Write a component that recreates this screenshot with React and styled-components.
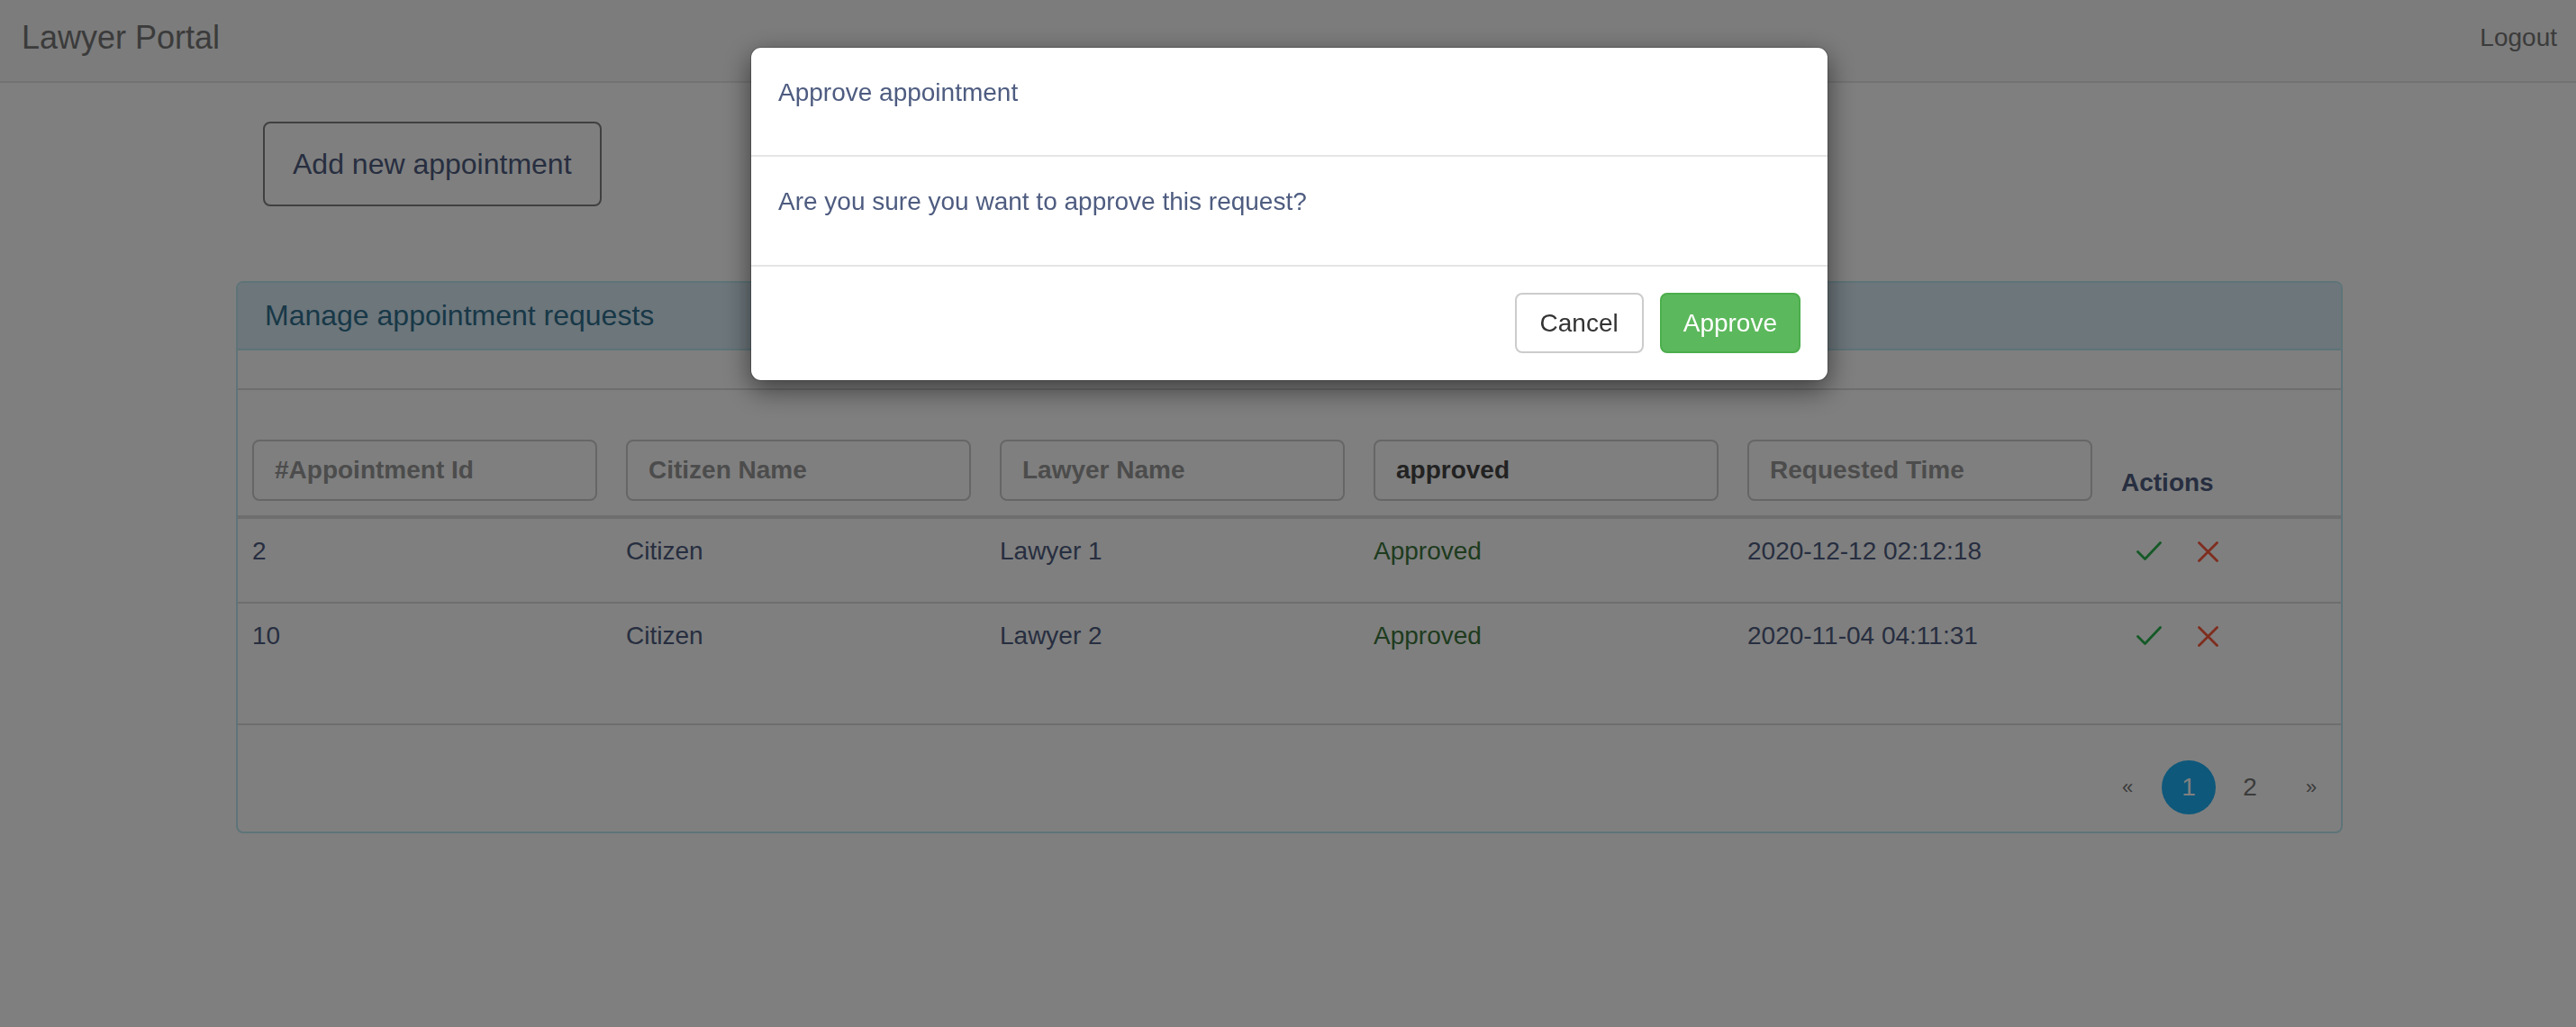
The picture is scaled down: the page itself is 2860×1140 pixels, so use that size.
import React from "react"
import styled, { createGlobalStyle } from "styled-components"

const TEXT = "#4e5c80"

const GlobalStyle = createGlobalStyle`
  html, body {
    margin: 0;
    padding: 0;
    background: #fff;
  }
  body {
    font-family: "Liberation Sans", Arial, Helvetica, sans-serif;
    color: ${TEXT};
  }
  * {
    box-sizing: border-box;
  }
`

const Navbar = styled.header`
  height: 92px;
  background: #f8f8f8;
  border-bottom: 2px solid #e7e7e7;
  display: flex;
  justify-content: space-between;
  align-items: flex-start;
  padding: 22px 21px 0 24px;
`

const Brand = styled.span`
  font-size: 36px;
  line-height: 40px;
  color: #777;
`

const NavLink = styled.span`
  font-size: 28px;
  line-height: 40px;
  color: #777;
`

const Main = styled.main`
  width: 2339px;
  margin-left: 262px;
  padding-top: 43px;
`

const AddButton = styled.button`
  margin-left: 30px;
  height: 94px;
  padding: 0 31px;
  font-family: inherit;
  font-size: 32px;
  color: ${TEXT};
  background: #fff;
  border: 2px solid #808080;
  border-radius: 8px;
`

const Panel = styled.section`
  margin-top: 83px;
  border: 2px solid #bce8f1;
  border-radius: 8px;
  overflow: hidden;
`

const PanelHeading = styled.div`
  background: #d9edf7;
  color: #31708f;
  border-bottom: 2px solid #bce8f1;
  padding: 18px 30px 19px;
  font-size: 32px;
  line-height: 36px;
`

const Strip = styled.div`
  height: 44px;
  border-bottom: 2px solid #ddd;
`

const Row = styled.div`
  display: grid;
  grid-template-columns: repeat(5, 415px) 1fr;
  align-items: ${(p) => (p.$head ? "end" : "start")};
  padding-top: ${(p) => (p.$head ? "55px" : "0")};
  border-bottom: ${(p) => (p.$head ? "4px solid #ddd" : p.$last ? "none" : "2px solid #ddd")};
`

const Cell = styled.div`
  padding: ${(p) => (p.$head ? "0 16px 16px" : "16px 16px 36px")};
  font-size: 28px;
  line-height: 40px;
  color: ${(p) => p.$color || TEXT};
`

const FilterInput = styled.input`
  display: block;
  width: 100%;
  height: 68px;
  padding: 0 23px;
  border: 2px solid #ccc;
  border-radius: 8px;
  font-family: inherit;
  font-size: 28px;
  font-weight: bold;
  color: #444;
  background: #fff;
  outline: none;

  &::placeholder {
    color: #999;
  }
`

const HeadLabel = styled.span`
  font-weight: bold;
`

const Actions = styled.div`
  display: flex;
  align-items: center;
  height: 40px;
  padding-left: 17px;
  gap: 40px;
`

const TableEnd = styled.div`
  height: 41px;
`

const PanelFooter = styled.div`
  border-top: 2px solid #ddd;
  padding: 39px 3px 19px;
  display: flex;
  justify-content: flex-end;
  gap: 8px;
`

const PageItem = styled.span`
  width: 60px;
  height: 60px;
  border-radius: 50%;
  display: flex;
  align-items: center;
  justify-content: center;
  font-size: ${(p) => (p.$arrow ? "22px" : "28px")};
  color: ${(p) => (p.$active ? "#fff" : "#777")};
  background: ${(p) => (p.$active ? "#1cb0f6" : "transparent")};
`

const Overlay = styled.div`
  position: fixed;
  inset: 0;
  padding-left: 3px;
  background: rgba(0, 0, 0, 0.5);
  display: flex;
  justify-content: center;
  align-items: flex-start;
  z-index: 10;
`

const Modal = styled.div`
  margin-top: 52px;
  width: 1197px;
  background: #fff;
  background-clip: padding-box;
  border: 1px solid rgba(0, 0, 0, 0.2);
  border-radius: 12px;
  box-shadow: 0 10px 30px rgba(0, 0, 0, 0.5);
`

const ModalHeader = styled.div`
  padding: 30px 30px 49px;
  border-bottom: 2px solid #e5e5e5;
  font-size: 28px;
  line-height: 40px;
`

const ModalBody = styled.div`
  padding: 30px 30px 50px;
  border-bottom: 2px solid #e5e5e5;
  font-size: 28px;
  line-height: 40px;
`

const ModalFooter = styled.div`
  padding: 29px 30px 30px;
  display: flex;
  justify-content: flex-end;
  gap: 18px;
`

const ModalButton = styled.button`
  height: 67px;
  padding: 0 ${(p) => (p.$primary ? "24px" : "26px")};
  font-family: inherit;
  font-size: 28px;
  border-radius: 8px;
  border: 2px solid ${(p) => (p.$primary ? "#4cae4c" : "#ccc")};
  background: ${(p) => (p.$primary ? "#5cb85c" : "#fff")};
  color: ${(p) => (p.$primary ? "#fff" : "#333")};
`

const CheckIcon = () => (
  <svg width="28" height="22" viewBox="0 0 28 22">
    <path
      d="M1.5 11.5 L9.5 19.5 L26.5 1.5"
      fill="none"
      stroke="#2bb34f"
      strokeWidth="2.8"
      strokeLinecap="round"
      strokeLinejoin="round"
    />
  </svg>
)

const CrossIcon = () => (
  <svg width="23" height="23" viewBox="0 0 23 23">
    <path
      d="M1.5 1.5 L21.5 21.5 M21.5 1.5 L1.5 21.5"
      fill="none"
      stroke="#ff5a3c"
      strokeWidth="2.8"
      strokeLinecap="round"
    />
  </svg>
)

const rows = [
  { id: "2", citizen: "Citizen", lawyer: "Lawyer 1", status: "Approved", time: "2020-12-12 02:12:18" },
  { id: "10", citizen: "Citizen", lawyer: "Lawyer 2", status: "Approved", time: "2020-11-04 04:11:31" },
]

export default function App() {
  return (
    <>
      <GlobalStyle />
      <Navbar>
        <Brand>Lawyer Portal</Brand>
        <NavLink>Logout</NavLink>
      </Navbar>
      <Main>
        <AddButton>Add new appointment</AddButton>
        <Panel>
          <PanelHeading>Manage appointment requests</PanelHeading>
          <Strip />
          <Row $head>
            <Cell $head><FilterInput placeholder="#Appointment Id" /></Cell>
            <Cell $head><FilterInput placeholder="Citizen Name" /></Cell>
            <Cell $head><FilterInput placeholder="Lawyer Name" /></Cell>
            <Cell $head><FilterInput value="approved" readOnly /></Cell>
            <Cell $head><FilterInput placeholder="Requested Time" /></Cell>
            <Cell $head><HeadLabel>Actions</HeadLabel></Cell>
          </Row>
          {rows.map((r, i) => (
            <Row key={r.id} $last={i === rows.length - 1}>
              <Cell>{r.id}</Cell>
              <Cell>{r.citizen}</Cell>
              <Cell>{r.lawyer}</Cell>
              <Cell $color="#3c763d">{r.status}</Cell>
              <Cell>{r.time}</Cell>
              <Cell>
                <Actions>
                  <CheckIcon />
                  <CrossIcon />
                </Actions>
              </Cell>
            </Row>
          ))}
          <TableEnd />
          <PanelFooter>
            <PageItem $arrow>«</PageItem>
            <PageItem $active>1</PageItem>
            <PageItem>2</PageItem>
            <PageItem $arrow>»</PageItem>
          </PanelFooter>
        </Panel>
      </Main>
      <Overlay>
        <Modal>
          <ModalHeader>Approve appointment</ModalHeader>
          <ModalBody>Are you sure you want to approve this request?</ModalBody>
          <ModalFooter>
            <ModalButton>Cancel</ModalButton>
            <ModalButton $primary>Approve</ModalButton>
          </ModalFooter>
        </Modal>
      </Overlay>
    </>
  )
}
